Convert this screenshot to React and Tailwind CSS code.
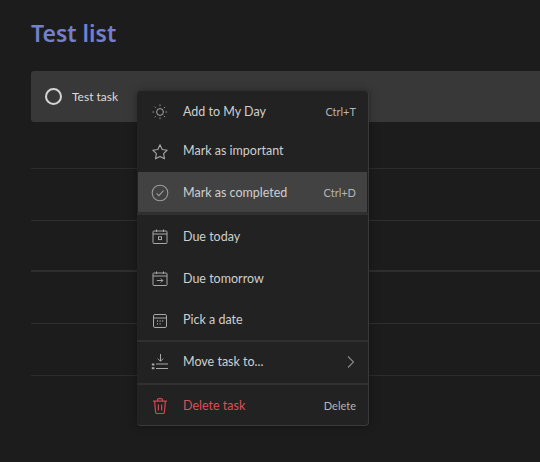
const SunIcon = () => (
  <svg width="18" height="18" viewBox="0 0 18 18" fill="none" stroke="#a8a8a8" strokeWidth="1">
    <circle cx="9" cy="9" r="3.4" />
    <path d="M9 1.5v2M9 14.5v2M1.5 9h2M14.5 9h2M3.7 3.7l1.4 1.4M12.9 12.9l1.4 1.4M3.7 14.3l1.4-1.4M12.9 5.1l1.4-1.4" strokeDasharray="1.3 0.6" />
  </svg>
);
const StarIcon = () => (
  <svg width="18" height="18" viewBox="0 0 18 18" fill="none" stroke="#a8a8a8" strokeWidth="1.1" strokeLinejoin="round">
    <path d="M9 1.8l2.2 4.7 5 .7-3.6 3.5.9 5.1L9 13.4l-4.5 2.4.9-5.1L1.8 7.2l5-.7z" />
  </svg>
);
const CheckCircleIcon = () => (
  <svg width="18" height="18" viewBox="0 0 18 18" fill="none" stroke="#9a9a9a" strokeWidth="1.1">
    <circle cx="9" cy="9" r="7.8" />
    <path d="M5.6 9.4l2.3 2.2 4.6-5" />
  </svg>
);
const CalTodayIcon = () => (
  <svg width="18" height="18" viewBox="0 0 18 18" fill="none" stroke="#a8a8a8" strokeWidth="1">
    <rect x="2" y="3" width="14" height="12.5" rx="0.8" />
    <path d="M2 6h14M5.5 1.5V4M12.5 1.5V4" />
    <rect x="7.5" y="8.8" width="3" height="2.8" />
  </svg>
);
const CalTomorrowIcon = () => (
  <svg width="18" height="18" viewBox="0 0 18 18" fill="none" stroke="#a8a8a8" strokeWidth="1">
    <rect x="2" y="3" width="14" height="12.5" rx="0.8" />
    <path d="M2 6h14M5.5 1.5V4M12.5 1.5V4M5.8 10.5h6M9.8 8.5l2 2-2 2" />
  </svg>
);
const CalPickIcon = () => (
  <svg width="18" height="18" viewBox="0 0 18 18" fill="none" stroke="#a8a8a8" strokeWidth="1">
    <rect x="2.5" y="2.5" width="13" height="13" rx="1.4" />
    <path d="M2.5 6h13" />
    <path d="M6 9h1M8.6 9h1M11.2 9h1M6 11.8h1M8.6 11.8h1" strokeWidth="1.3" />
  </svg>
);
const MoveIcon = () => (
  <svg width="18" height="18" viewBox="0 0 18 18" fill="none" stroke="#a8a8a8" strokeWidth="1">
    <path d="M9.5 1v7M6.8 5.6l2.7 2.7 2.7-2.7M5 11h12M5 15.5h12" />
    <rect x="0.8" y="10.5" width="2.6" height="2" fill="#a8a8a8" stroke="none" />
    <rect x="0.8" y="14.2" width="2.6" height="2" fill="#a8a8a8" stroke="none" />
  </svg>
);
const TrashIcon = () => (
  <svg width="18" height="18" viewBox="0 0 18 18" fill="none" stroke="#d64550" strokeWidth="1.2" strokeLinejoin="round">
    <path d="M2 4.2h14M6.6 4V2.6a1 1 0 0 1 1-1h2.8a1 1 0 0 1 1 1V4M3.6 4.2l1 11a1.4 1.4 0 0 0 1.4 1.3h6a1.4 1.4 0 0 0 1.4-1.3l1-11M7.4 7.5v6M10.6 7.5v6" />
  </svg>
);
const Chevron = () => (
  <svg width="10" height="14" viewBox="0 0 10 14" fill="none" stroke="#8a8a8a" strokeWidth="1.1">
    <path d="M2 1.5L7.5 7 2 12.5" />
  </svg>
);

const Item = ({ icon, label, shortcut, h, red, active, after }) => (
  <div
    className={`flex items-center pl-[14px] pr-[12px] ${h} ${active ? "bg-[#424242] mx-px border-b border-[#2f2f2f]" : ""}`}
  >
    <div className={`w-[18px] h-[18px] shrink-0 flex items-center justify-center ${active ? "-ml-px" : ""}`}>{icon}</div>
    <span className={`ml-[14px] text-[12.5px] flex-1 ${red ? "text-[#d8505c]" : "text-[#cfcfcf]"}`}>{label}</span>
    {shortcut && <span className={`text-[11px] text-[#b4b4b4] ${active ? "-mr-px" : ""}`}>{shortcut}</span>}
    {after}
  </div>
);

const Divider = () => <div className="h-[2px] bg-[#303030]" />;

export default function App() {
  return (
    <div className="relative w-[540px] h-[462px] overflow-hidden bg-[#1c1c1c] pt-[17px] pl-[31px] font-['Lato','Noto_Sans',sans-serif]">
      <h1 className="text-[23px] leading-[32px] font-semibold font-['Noto_Sans',sans-serif] text-[#7480cc]">Test list</h1>
      <div className="mt-[22px] h-[51px] bg-[#383838] rounded-l-[3px] flex items-center pl-[14px]">
        <span className="w-[17px] h-[17px] rounded-full border-2 border-[#d4d4d4]" />
        <span className="ml-[10px] text-[12px] text-[#dcdcdc]">Test task</span>
      </div>
      <div className="flex flex-col">
        <div className="h-[47px] border-b border-[#2c2c2c]" />
        <div className="h-[52px] border-b border-[#2e2e2e]" />
        <div className="h-[51px] border-b-2 border-[#2e2e2e]" />
        <div className="h-[52px] border-b border-[#2e2e2e]" />
        <div className="h-[52px] border-b border-[#2c2c2c]" />
      </div>

      <div className="absolute left-[137px] top-[91px] w-[232px] h-[335px] bg-[#222222] rounded-[4px] border-r border-b border-[#3a3a3a] shadow-[0_0_8px_rgba(0,0,0,0.35)] flex flex-col">
        <Item h="h-[40px] pt-[2px]" icon={<SunIcon />} label="Add to My Day" shortcut="Ctrl+T" />
        <Item h="h-[40px] pt-[2px]" icon={<StarIcon />} label="Mark as important" />
        <div className="pt-px" />
        <Item h="h-[42px] pt-[3px]" active icon={<CheckCircleIcon />} label="Mark as completed" shortcut="Ctrl+D" />
        <Divider />
        <Item h="h-[42px] pt-[2px]" icon={<CalTodayIcon />} label="Due today" />
        <Item h="h-[43px] pt-[2px]" icon={<CalTomorrowIcon />} label="Due tomorrow" />
        <Item h="h-[40px] pt-[2px]" icon={<CalPickIcon />} label="Pick a date" />
        <Divider />
        <Item h="h-[42px]" icon={<MoveIcon />} label="Move task to..." after={<Chevron />} />
        <Divider />
        <Item h="h-[40px] pt-[2px]" red icon={<TrashIcon />} label="Delete task" shortcut="Delete" />
      </div>
    </div>
  );
}
